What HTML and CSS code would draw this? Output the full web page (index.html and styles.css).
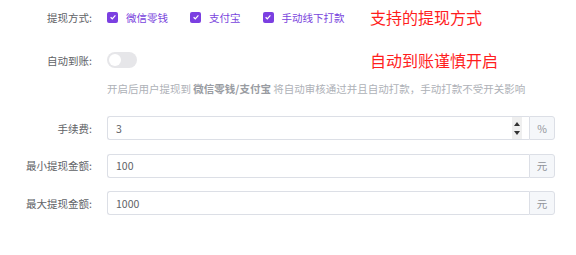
FILE: index.html
```html
<!DOCTYPE html>
<html lang="zh-CN">
<head>
    <meta charset="utf-8" />
    <title>提现设置</title>
    <link rel="stylesheet" href="styles.css">
</head>
<body>
    <form class="setting-form">
        <div class="form-item item-way">
            <label class="item-label">提现方式:</label>
            <div class="item-content fixed">
                <span class="check"><i class="check-box"><svg viewBox="0 0 10 10" width="10" height="10"><path d="M2.6 5.2 L4.3 6.8 L7.4 3.4" fill="none" stroke="#fff" stroke-width="1.2"/></svg></i>微信零钱</span>
                <span class="check"><i class="check-box"><svg viewBox="0 0 10 10" width="10" height="10"><path d="M2.6 5.2 L4.3 6.8 L7.4 3.4" fill="none" stroke="#fff" stroke-width="1.2"/></svg></i>支付宝</span>
                <span class="check"><i class="check-box"><svg viewBox="0 0 10 10" width="10" height="10"><path d="M2.6 5.2 L4.3 6.8 L7.4 3.4" fill="none" stroke="#fff" stroke-width="1.2"/></svg></i>手动线下打款</span>
            </div>
            <span class="note">支持的提现方式</span>
        </div>

        <div class="form-item item-auto">
            <label class="item-label">自动到账:</label>
            <div class="item-content fixed">
                <span class="switch"><span class="switch-knob"></span></span>
            </div>
            <span class="note">自动到账谨慎开启</span>
        </div>
        <p class="help">开启后用户提现到 <b>微信零钱/支付宝</b> 将自动审核通过并且自动打款，手动打款不受开关影响</p>

        <div class="form-item item-input">
            <label class="item-label">手续费:</label>
            <div class="input-group">
                <div class="input-box">
                    <input class="input" type="text" value="3">
                    <span class="spin"><i class="spin-up"></i><i class="spin-down"></i></span>
                </div>
                <span class="append">%</span>
            </div>
        </div>

        <div class="form-item item-input">
            <label class="item-label">最小提现金额:</label>
            <div class="input-group">
                <div class="input-box">
                    <input class="input" type="text" value="100">
                </div>
                <span class="append">元</span>
            </div>
        </div>

        <div class="form-item item-input">
            <label class="item-label">最大提现金额:</label>
            <div class="input-group">
                <div class="input-box">
                    <input class="input" type="text" value="1000">
                </div>
                <span class="append">元</span>
            </div>
        </div>
    </form>
</body>
</html>
```

FILE: styles.css
```css
body {margin:0; background:#fff; font-family:"Noto Sans CJK SC", "Noto Sans", sans-serif; font-size:10.5px; color:#606266;}
.setting-form {padding-top:5px;}

.form-item {display:flex; align-items:center; height:24px;}
.item-label {width:92px; padding-right:15px; text-align:right; color:#606266; flex-shrink:0;}
.item-content.fixed {width:263px; display:flex; align-items:center;}
.item-way {margin-bottom:19px;}
.item-input {margin-bottom:13.5px;}

.check {display:inline-flex; align-items:center; color:#7a45dd; margin-right:22px; white-space:nowrap;}
.check-box {display:inline-flex; align-items:center; justify-content:center; width:11px; height:11px; background:#7b3fe1; border-radius:2px; margin-right:8px;}
.check-box svg {display:block;}

.note {color:#ff1e1e; font-size:16px; white-space:nowrap;}

.switch {display:inline-block; width:30px; height:16px; border-radius:8px; background:#e6e6e9; position:relative;}
.switch-knob {position:absolute; left:2px; top:2px; width:12px; height:12px; border-radius:50%; background:#fff;}

.help {margin:11px 0 21px 107px; line-height:12px; color:#aeb1b7; white-space:nowrap;}
.help b {color:#999ca2;}

.input-group {display:flex; width:448px; height:24px;}
.input-box {flex:1; display:flex; align-items:stretch; border:1px solid #dcdfe6; border-right:none; border-radius:3px 0 0 3px; box-sizing:border-box;}
.input {flex:1; min-width:0; border:none; outline:none; padding:0 0 0 8px; font-family:inherit; font-size:10.5px; color:#606266; background:transparent;}
.spin {width:10px; margin:0 7px 0 0; background:#efefef; display:flex; flex-direction:column; justify-content:center; align-items:center; gap:5px;}
.spin-up {width:0; height:0; border-left:3.5px solid transparent; border-right:3.5px solid transparent; border-bottom:4px solid #333;}
.spin-down {width:0; height:0; border-left:3.5px solid transparent; border-right:3.5px solid transparent; border-top:4px solid #333;}
.append {width:26px; box-sizing:border-box; display:flex; align-items:center; justify-content:center; background:#f5f7fa; color:#909399; border:1px solid #dcdfe6; border-radius:0 3px 3px 0;}
```
